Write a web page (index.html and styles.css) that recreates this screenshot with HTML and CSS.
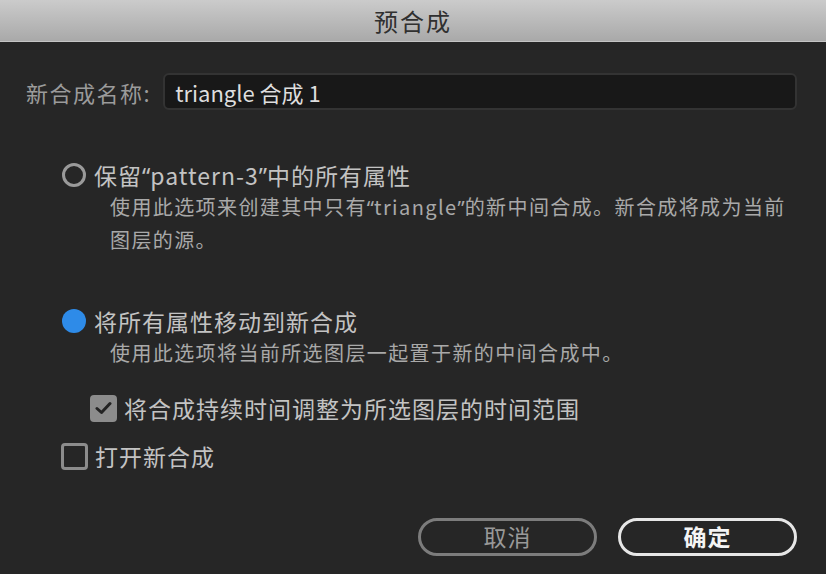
FILE: index.html
```html
<!DOCTYPE html>
<html>

<head>
  <title>预合成</title>
  <link rel="stylesheet" href="styles.css">
</head>

<body>
  <div class="dialog">
    <div class="title-bar">预合成</div>

    <div class="name-row">
      <label for="compName">新合成名称:</label>
      <input type="text" id="compName" value="triangle 合成 1">
    </div>

    <div class="options">
      <div class="option-row">
        <span class="radio"></span>
        <span>保留<span class="q">“</span>pattern-3<span class="q">”</span>中的所有属性</span>
      </div>
      <div class="desc">使用此选项来创建其中只有<span class="q">“</span>triangle<span class="q">”</span>的新中间合成。新合成将成为当前图层的源。</div>

      <div class="option-row option-gap">
        <span class="radio radio-on"></span>
        <span>将所有属性移动到新合成</span>
      </div>
      <div class="desc">使用此选项将当前所选图层一起置于新的中间合成中。</div>

      <div class="option-row check-row sub-check">
        <span class="check check-on">
          <svg width="17" height="14" viewBox="0 0 17 14">
            <polyline points="2,7.5 6.5,11.5 15,2.5" fill="none" stroke="#232323" stroke-width="3" stroke-linecap="round" stroke-linejoin="round" />
          </svg>
        </span>
        <span>将合成持续时间调整为所选图层的时间范围</span>
      </div>

      <div class="option-row check-row open-check">
        <span class="check"></span>
        <span>打开新合成</span>
      </div>
    </div>

    <div class="buttons">
      <button class="btn btn-cancel">取消</button>
      <button class="btn btn-ok">确定</button>
    </div>
  </div>
</body>

</html>
```

FILE: styles.css
```css
body {
  margin: 0;
  background-color: #262626;
  font-family: "Noto Sans CJK SC", "Noto Sans", sans-serif;
}

.dialog {
  width: 826px;
  height: 574px;
  background-color: #262626;
}

.title-bar {
  height: 41px;
  line-height: 41px;
  text-align: center;
  font-size: 24px;
  letter-spacing: 2px;
  color: #303030;
  background: linear-gradient(#cbcbcb, #a9a9a9);
  border-bottom: 1px solid #c4c4c4;
}

.name-row {
  display: flex;
  align-items: center;
  margin-top: 31px;
  padding: 0 29px 0 26px;
}

.name-row label {
  font-size: 22px;
  letter-spacing: 1.5px;
  color: #9b9b9b;
  margin-right: 12px;
}

.name-row input {
  flex: 1;
  height: 37px;
  box-sizing: border-box;
  padding: 0 10px;
  background-color: #181818;
  border: 2px solid #333333;
  border-radius: 6px;
  color: #dedede;
  font-family: "Noto Sans CJK SC", "Noto Sans", sans-serif;
  font-size: 22px;
  outline: none;
}

/* narrow latin quotes instead of the full-width CJK ones */
.q {
  font-family: "Noto Sans", sans-serif;
  letter-spacing: 0;
}

.options {
  padding: 0 29px 0 62px;
  margin-top: 49px;
}

.option-row {
  display: flex;
  align-items: center;
  gap: 8px;
  height: 32px;
  font-size: 23px;
  letter-spacing: 1px;
  color: #c3c3c3;
}

.option-gap {
  margin-top: 49px;
}

.radio {
  width: 24px;
  height: 24px;
  box-sizing: border-box;
  border: 3px solid #9a9a9a;
  border-radius: 50%;
  flex-shrink: 0;
}

.radio-on {
  border: none;
  background-color: #2e8be8;
}

.desc {
  padding-left: 48px;
  line-height: 32px;
  font-size: 20px;
  letter-spacing: 1.4px;
  color: #a9a9a9;
}

.check {
  width: 27px;
  height: 27px;
  box-sizing: border-box;
  border: 3px solid #8c8c8c;
  border-radius: 4px;
  flex-shrink: 0;
  display: flex;
  align-items: center;
  justify-content: center;
}

.check-on {
  background-color: #8c8c8c;
}

.check-row {
  gap: 7px;
}

.sub-check {
  margin-top: 23px;
  padding-left: 28px;
}

.open-check {
  margin-top: 16px;
  margin-left: -1px;
}

.buttons {
  display: flex;
  justify-content: flex-end;
  gap: 21px;
  margin-top: 46px;
  padding-right: 29px;
}

.btn {
  width: 179px;
  height: 38px;
  border-radius: 19px;
  background: transparent;
  font-family: "Noto Sans CJK SC", "Noto Sans", sans-serif;
  font-size: 23px;
  line-height: 30px;
  letter-spacing: 1px;
  padding: 0 0 2px;
}

.btn-cancel {
  border: 3px solid #7c7c7c;
  color: #999999;
}

.btn-ok {
  border: 3px solid #e6e6e6;
  color: #f4f4f4;
  font-weight: bold;
}
```
